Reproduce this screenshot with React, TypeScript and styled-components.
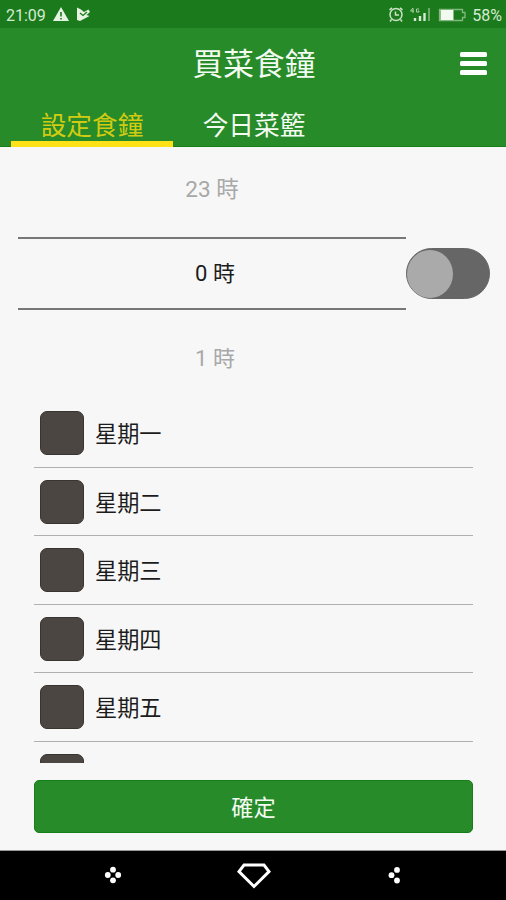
import React, { useState } from "react";
import styled, { createGlobalStyle } from "styled-components";

const GlobalStyle = createGlobalStyle`
  * { box-sizing: border-box; }
  body { margin: 0; background: #f7f7f7; overflow: hidden; }
`;

const Screen = styled.div`
  width: 506px;
  height: 900px;
  display: flex;
  flex-direction: column;
  overflow: hidden;
  background: #f7f7f7;
  color: #1c1c1c;
  font-family: Roboto, "Noto Sans CJK TC", sans-serif;
`;

const StatusBar = styled.div`
  flex: none;
  height: 28px;
  padding: 2px 4px 0 6px;
  display: flex;
  align-items: center;
  justify-content: space-between;
  background: #1b7a1c;
  color: #d5ead2;
  font-size: 16px;
  line-height: 26px;
`;

const StatusGroup = styled.div`
  display: flex;
  align-items: center;
  gap: 6px;
  svg { display: block; }
`;

const StatusText = styled.span`
  padding-top: 2px;
  line-height: 24px;
`;

const Header = styled.header`
  flex: none;
  height: 119px;
  display: flex;
  flex-direction: column;
  background: #278b2a;
  border-bottom: 1px solid #188019;
  color: #f4fbf1;
`;

const TitleBar = styled.div`
  height: 72px;
  display: grid;
  grid-template-columns: 60px 1fr 60px;
  align-items: center;
  padding-left: 2px;
`;

const Title = styled.h1`
  grid-column: 2;
  margin: 0;
  padding-top: 2px;
  text-align: center;
  font-size: 30.7px;
  font-weight: 400;
  line-height: 70px;
`;

const MenuButton = styled.button`
  display: flex;
  flex-direction: column;
  gap: 4px;
  width: 27px;
  margin: -2px 0 0 14px;
  padding: 0;
  border: 0;
  background: none;
`;

const MenuBar = styled.span`
  height: 5px;
  border-radius: 1.5px;
  background: #fff;
`;

const Tabs = styled.nav`
  flex: 1;
  display: flex;
  padding-left: 11px;
  margin-bottom: -1px;
`;

const Tab = styled.button<{ $active: boolean }>`
  width: 162px;
  height: 47px;
  padding: 12px 0 0;
  border: 0;
  border-bottom: 6px solid ${(p) => (p.$active ? "#ffe118" : "transparent")};
  background: none;
  color: ${(p) => (p.$active ? "#d3cb12" : "#f4fbf1")};
  font: inherit;
  font-size: 25.7px;
  white-space: nowrap;
`;

const TabLabel = styled.span`
  display: block;
  height: 29px;
  line-height: 29px;
`;

const TimeRow = styled.section`
  flex: none;
  height: 252px;
  display: flex;
  padding-left: 18px;
`;

const Picker = styled.div`
  width: 388px;
  height: 100%;
  display: grid;
  grid-template-rows: 83px 73px 96px;
  padding-top: 7px;
`;

const Hour = styled.div<{ $selected?: boolean }>`
  padding: 1px 0 0 6px;
  display: flex;
  align-items: center;
  justify-content: center;
  font-size: 22px;
  line-height: 30px;
  color: ${(p) => (p.$selected ? "#1c1c1c" : "#a8a8a8")};
  border-style: solid;
  border-color: #777;
  border-width: ${(p) => (p.$selected ? "2px 0" : "0")};
`;

const HourBefore = styled(Hour)`
  padding: 0 0 11px;
  font-size: 22.6px;
`;

const Switch = styled.button`
  width: 84px;
  height: 51px;
  margin: 101px 0 0;
  padding: 0;
  border: 1.5px solid #666;
  border-radius: 26px;
  background: #666;
  display: flex;
  align-items: center;
`;

const Knob = styled.span<{ $on: boolean }>`
  width: 46px;
  height: 48px;
  border-radius: 50%;
  background: #aaa;
  margin-left: ${(p) => (p.$on ? 35 : 0)}px;
`;

const DayList = styled.div`
  flex: none;
  height: 364px;
  margin: 0 33px 0 34px;
  overflow: hidden;
`;

const DayRow = styled.div`
  height: 68.5px;
  padding: 1px 0 0 5.5px;
  display: flex;
  align-items: center;
  gap: 11.5px;
  border-bottom: 1px solid #b0b0b0;
  font-size: 22.2px;
  line-height: 30px;
`;

const DayName = styled.span`
  padding-top: 2px;
`;

const CheckBox = styled.span`
  width: 44px;
  height: 44px;
  border: 1px solid #383430;
  border-radius: 7px;
  background: #4b4642;
`;

const Footer = styled.footer`
  flex: none;
  height: 88px;
  padding: 17px 33px 0 34px;
  border-bottom: 1px solid #999;
`;

const Confirm = styled.button`
  display: block;
  width: 100%;
  height: 53px;
  padding: 0 0 2px;
  border: 1px solid #168018;
  border-radius: 5px;
  background: #278b2a;
  color: #f4fbf1;
  font: inherit;
  font-size: 22.2px;
`;

const NavBar = styled.div`
  flex: 1;
  display: grid;
  grid-template-columns: 1fr 1fr 1fr;
  padding: 0 42px 2px 43px;
  justify-items: center;
  align-items: center;
  background: #000;
  svg { display: block; }
`;

const days = ["星期一", "星期二", "星期三", "星期四", "星期五"];
const tabs = ["設定食鐘", "今日菜籃"];

export default function App() {
  const [active, setActive] = useState(0);
  const [on, setOn] = useState(false);
  return (
    <>
      <GlobalStyle />
      <Screen>
        <StatusBar>
          <StatusGroup>
            <StatusText>21:09</StatusText>
            <svg width="18" height="16" viewBox="0 0 18 16">
              <path d="M9 0 17 14H1Z" fill="#e6f3e3" />
              <path d="M9 5v4.5M9 11v1.6" stroke="#1b7a1c" strokeWidth="1.6" />
            </svg>
            <svg width="15" height="16" viewBox="0 0 15 16">
              <path d="M1 .5 5 2.5 8 5 12.5 2.5 14 5 10.5 8 13.5 9 4 14 1 13Z" fill="#e6f3e3" />
              <path d="m4 6 3 2.5 4-3.5" fill="none" stroke="#1b7a1c" strokeWidth="1.3" />
            </svg>
          </StatusGroup>
          <StatusGroup>
            <svg width="16" height="16" viewBox="0 0 16 16" fill="none" stroke="#c9e2c5" strokeWidth="1.5">
              <circle cx="9" cy="7.5" r="6" />
              <path d="M2.5 2.8 5 .8M13 .8l2.5 2M8.5 4.5V8H12M4.5 12.5 3 14.5M13.5 12.5l1.5 2" />
            </svg>
            <svg width="23" height="16" viewBox="0 0 23 16">
              <path d="M4 1 1.5 4H5M4 1v5M10 2H7.5v3H10V4H9" fill="none" stroke="#a9d0a5" strokeWidth="1" />
              <path d="M6 11v3M11 9v5M15.5 6v8" stroke="#d5ead2" strokeWidth="2.4" />
              <path d="M20 1v13" stroke="#78b074" strokeWidth="1.8" />
            </svg>
            <svg width="28" height="14" viewBox="0 0 28 14">
              <path d="M1.5 1.5h23v3H27v5h-2.5v3h-23Z" fill="none" stroke="#82b77e" strokeWidth="1.3" />
              <path d="M2.5 2h13v10h-13Z" fill="#f2f9ef" />
            </svg>
            <StatusText>58%</StatusText>
          </StatusGroup>
        </StatusBar>
        <Header>
          <TitleBar>
            <Title>買菜食鐘</Title>
            <MenuButton aria-label="選單">
              <MenuBar />
              <MenuBar />
              <MenuBar />
            </MenuButton>
          </TitleBar>
          <Tabs>
            {tabs.map((label, i) => (
              <Tab key={label} $active={active === i} onClick={() => setActive(i)}>
                <TabLabel>{label}</TabLabel>
              </Tab>
            ))}
          </Tabs>
        </Header>
        <TimeRow>
          <Picker>
            <HourBefore>23 時</HourBefore>
            <Hour $selected>0 時</Hour>
            <Hour>1 時</Hour>
          </Picker>
          <Switch role="switch" aria-checked={on} onClick={() => setOn(!on)}>
            <Knob $on={on} />
          </Switch>
        </TimeRow>
        <DayList>
          {days.map((day) => (
            <DayRow key={day}>
              <CheckBox />
              <DayName>{day}</DayName>
            </DayRow>
          ))}
          <DayRow>
            <CheckBox />
          </DayRow>
        </DayList>
        <Footer>
          <Confirm>確定</Confirm>
        </Footer>
        <NavBar>
          <svg width="18" height="18" viewBox="0 0 18 18" fill="#fff">
            <circle cx="9" cy="3.7" r="2.9" />
            <circle cx="3.8" cy="9" r="2.9" />
            <circle cx="14.2" cy="9" r="2.9" />
            <circle cx="9" cy="14.3" r="2.9" />
          </svg>
          <svg width="36" height="28" viewBox="0 0 36 28">
            <path d="M9 4h20l5 6.5L19 25.5 4 10.5Z" fill="none" stroke="#fff" strokeWidth="3" />
          </svg>
          <svg width="14" height="18" viewBox="0 0 14 18" fill="#fff">
            <circle cx="10" cy="3.9" r="2.9" />
            <circle cx="4.5" cy="9.2" r="2.9" />
            <circle cx="10" cy="14.5" r="2.9" />
          </svg>
        </NavBar>
      </Screen>
    </>
  );
}
